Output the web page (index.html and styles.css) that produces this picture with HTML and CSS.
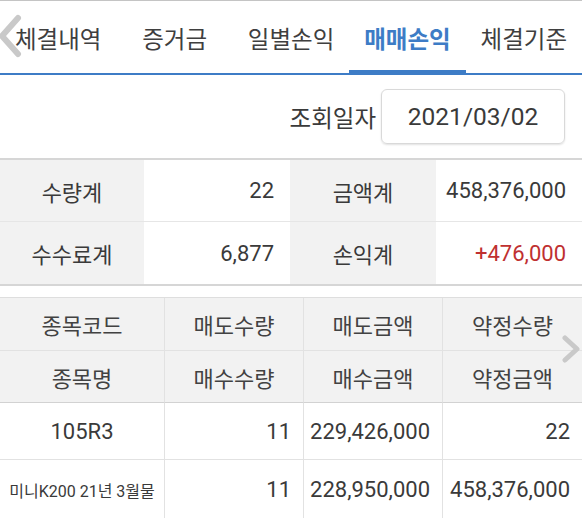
FILE: index.html
```html
<!DOCTYPE html>
<html lang="ko">
<head>
<meta charset="utf-8">
<title>매매손익</title>
<link rel="stylesheet" href="styles.css">
</head>
<body>
<div class="page">
  <nav class="tabs">
    <svg class="chev chev-left" width="24" height="44" viewBox="0 0 24 44"><path d="M20 4 L4 22 L20 40" fill="none" stroke="#c9c9c9" stroke-width="6" stroke-linecap="round" stroke-linejoin="round"/></svg>
    <div class="tab">체결내역</div>
    <div class="tab">증거금</div>
    <div class="tab">일별손익</div>
    <div class="tab active">매매손익</div>
    <div class="tab">체결기준</div>
  </nav>

  <div class="date-row">
    <span class="date-label">조회일자</span>
    <div class="date-input">2021/03/02</div>
  </div>

  <div class="summary">
    <div class="s-label">수량계</div>
    <div class="s-value">22</div>
    <div class="s-label">금액계</div>
    <div class="s-value">458,376,000</div>
    <div class="s-label last">수수료계</div>
    <div class="s-value last">6,877</div>
    <div class="s-label last">손익계</div>
    <div class="s-value last red">+476,000</div>
  </div>

  <div class="grid-wrap">
    <div class="grid">
      <div class="h">종목코드</div>
      <div class="h">매도수량</div>
      <div class="h">매도금액</div>
      <div class="h end">약정수량</div>
      <div class="h h2">종목명</div>
      <div class="h h2">매수수량</div>
      <div class="h h2">매수금액</div>
      <div class="h h2 end">약정금액</div>
      <div class="d center">105R3</div>
      <div class="d">11</div>
      <div class="d">229,426,000</div>
      <div class="d end">22</div>
      <div class="d center small">미니K200 21년 3월물</div>
      <div class="d">11</div>
      <div class="d">228,950,000</div>
      <div class="d end">458,376,000</div>
    </div>
    <svg class="chev chev-right" width="20" height="28" viewBox="0 0 20 28"><path d="M4 3 L16 14 L4 25" fill="none" stroke="#c9c9c9" stroke-width="5" stroke-linecap="round" stroke-linejoin="round"/></svg>
  </div>
</div>
</body>
</html>
```

FILE: styles.css
```css
html, body {
  margin: 0;
  padding: 0;
  background: #fff;
}
body {
  font-family: "Roboto", "Noto Sans CJK KR", sans-serif;
  color: #3a3a3a;
  font-size: 22px;
}
.page {
  width: 582px;
  height: 518px;
  overflow: hidden;
  border-top: 1px solid #c4c4c4;
  box-sizing: border-box;
}
.tabs {
  position: relative;
  display: flex;
  height: 72px;
  border-bottom: 2px solid #3d7cc6;
}
.chev {
  position: absolute;
}
.chev-left {
  left: -2px;
  top: 13px;
}
.tab {
  position: relative;
  flex: 1;
  display: flex;
  align-items: center;
  justify-content: center;
  padding-top: 2px;
  font-size: 23.5px;
  color: #3f3f3f;
}
.tab.active {
  color: #3d7cc6;
  font-weight: bold;
  box-shadow: inset 0 -3px 0 #3d7cc6;
}
.date-row {
  display: flex;
  justify-content: flex-end;
  align-items: center;
  gap: 5px;
  height: 83px;
  padding-right: 17px;
  border-bottom: 2px solid #d6d6d6;
}
.date-label {
  color: #3a3a3a;
  font-size: 23.5px;
}
.date-input {
  width: 184px;
  height: 55px;
  box-sizing: border-box;
  border: 1px solid #d9d9d9;
  border-radius: 6px;
  box-shadow: 0 1px 2px rgba(0, 0, 0, 0.12);
  display: flex;
  align-items: center;
  justify-content: center;
  font-size: 24.5px;
}
.summary {
  display: grid;
  grid-template-columns: 144px 146px 146px 1fr;
  grid-auto-rows: 62px;
  border-bottom: 2px solid #d6d6d6;
}
.s-label, .s-value {
  display: flex;
  align-items: center;
  border-bottom: 1px solid #e6e6e6;
}
.s-label.last, .s-value.last {
  border-bottom: none;
}
.s-label {
  background: #f2f2f2;
  justify-content: center;
}
.s-value {
  justify-content: flex-end;
  padding-right: 16px;
}
.red {
  color: #bf3030;
}
.grid-wrap {
  position: relative;
  margin-top: 11px;
}
.grid {
  display: grid;
  grid-template-columns: 165px 139px 139px 1fr;
  grid-template-rows: 53px 52px 57px 60px;
  border-top: 1px solid #dedede;
}
.h, .d {
  display: flex;
  align-items: center;
  border-right: 1px solid #e2e2e2;
  border-bottom: 1px solid #e2e2e2;
}
.end {
  border-right: none;
}
.h {
  background: #f2f2f2;
  justify-content: center;
  color: #424242;
}
.h.h2 {
  border-bottom-color: #d2d2d2;
}
.d {
  justify-content: flex-end;
  padding-right: 12px;
}
.d.center {
  justify-content: center;
  padding-right: 0;
}
.d.small {
  font-size: 16px;
  white-space: nowrap;
}
.chev-right {
  right: 1px;
  top: 38px;
}
```
